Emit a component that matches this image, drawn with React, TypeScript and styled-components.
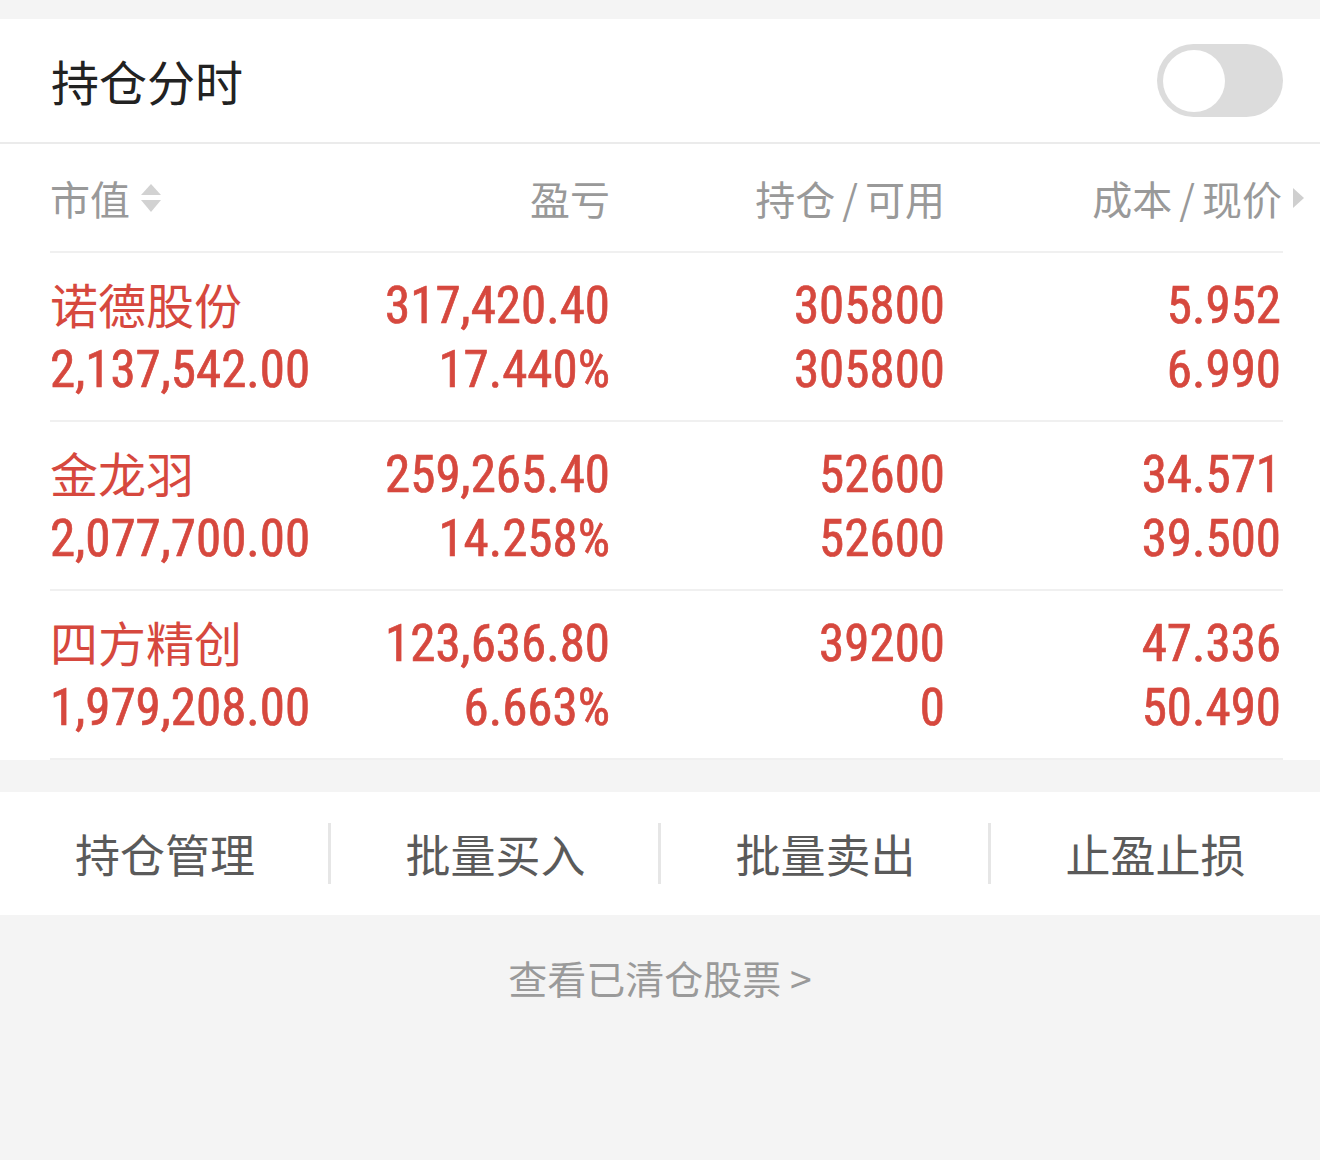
import React from 'react';
import styled, { createGlobalStyle } from 'styled-components';

const GlobalStyle = createGlobalStyle`
  html, body {
    margin: 0;
    padding: 0;
    background: #f4f4f4;
    font-family: 'Noto Sans CJK SC', 'Noto Sans', sans-serif;
  }
`;

const RED = '#d6483e';

// page shell
const Page = styled.div`
  width: 1320px;
  min-height: 1160px;
  padding-top: 19px;
  background: #f4f4f4;
`;

const TopBar = styled.div`
  height: 123px;
  display: flex;
  align-items: center;
  justify-content: space-between;
  padding: 0 37px 0 51px;
  background: #fff;
  border-bottom: 2px solid #ebebeb;
`;

const Title = styled.div`
  font-size: 48px;
  line-height: 1;
  color: #222;
  margin-top: -2px;
`;

const Toggle = styled.div`
  width: 126px;
  height: 73px;
  border-radius: 37px;
  background: #dcdcdc;
  display: flex;
  align-items: center;
  padding-left: 6px;
  box-sizing: border-box;
`;

const Knob = styled.div`
  width: 62px;
  height: 62px;
  border-radius: 50%;
  background: #fff;
`;

// holdings table
const Table = styled.div`
  background: #fff;
  padding: 0 37px 0 50px;
`;

const Grid = styled.div<{ $head?: boolean }>`
  display: grid;
  grid-template-columns: 280px 280px 335px 1fr;
  border-bottom: 2px solid #f0f0f0;
  height: ${(p) => (p.$head ? '109px' : '169px')};
  align-items: ${(p) => (p.$head ? 'center' : 'start')};
  padding-top: ${(p) => (p.$head ? '0' : '21px')};
  box-sizing: border-box;
`;

const HeadCell = styled.div<{ $left?: boolean; $trail?: boolean }>`
  display: flex;
  align-items: center;
  justify-content: ${(p) => (p.$left ? 'flex-start' : 'flex-end')};
  gap: 10px;
  font-size: 40px;
  line-height: 1;
  color: #999;
  margin-top: 0;
  margin-right: ${(p) => (p.$trail ? '-22px' : '0')};
`;

const Slash = styled.span`
  margin: 0 7px;
`;

const Cell = styled.div<{ $left?: boolean; $end?: boolean }>`
  display: flex;
  flex-direction: column;
  align-items: ${(p) => (p.$left ? 'flex-start' : 'flex-end')};
  padding-right: ${(p) => (p.$end ? '2px' : '0')};
  color: ${RED};
`;

const Name = styled.div`
  font-size: 48px;
  line-height: 58px;
  height: 64px;
`;

const Num = styled.div`
  font-family: 'Liberation Sans Narrow', 'Roboto Condensed', Roboto, sans-serif;
  font-size: 51px;
  line-height: 64px;
  height: 64px;
  -webkit-text-stroke: 0.7px ${RED};
`;

// bottom actions
const ActionBar = styled.div`
  margin-top: 32px;
  height: 123px;
  background: #fff;
  display: grid;
  grid-template-columns: repeat(4, 1fr);
  align-items: center;
`;

const Action = styled.div<{ $first?: boolean }>`
  height: 61px;
  display: flex;
  align-items: center;
  justify-content: center;
  font-size: 45px;
  color: #5a5a5a;
  border-left: ${(p) => (p.$first ? 'none' : '3px solid #e6e6e6')};
  margin-left: ${(p) => (p.$first ? '0' : '-2px')};
`;

const Footer = styled.div`
  text-align: center;
  font-size: 39px;
  line-height: 50px;
  color: #9a9a9a;
  margin-top: 37px;
`;

const SortIcon = () => (
  <svg width="22" height="32" viewBox="0 0 22 32">
    <polygon points="11,2 21,13 1,13" fill="#d2d2d2" />
    <polygon points="1,18 21,18 11,30" fill="#d2d2d2" />
  </svg>
);

const Caret = () => (
  <svg width="13" height="22" viewBox="0 0 13 22">
    <polygon points="1,1 12,11 1,21" fill="#cfcfcf" />
  </svg>
);

const rows = [
  { name: '诺德股份', value: '2,137,542.00', pl: '317,420.40', pct: '17.440%', hold: '305800', avail: '305800', cost: '5.952', price: '6.990' },
  { name: '金龙羽', value: '2,077,700.00', pl: '259,265.40', pct: '14.258%', hold: '52600', avail: '52600', cost: '34.571', price: '39.500' },
  { name: '四方精创', value: '1,979,208.00', pl: '123,636.80', pct: '6.663%', hold: '39200', avail: '0', cost: '47.336', price: '50.490' },
];

const actions = ['持仓管理', '批量买入', '批量卖出', '止盈止损'];

export default function App() {
  return (
    <Page>
      <GlobalStyle />
      <TopBar>
        <Title>持仓分时</Title>
        <Toggle>
          <Knob />
        </Toggle>
      </TopBar>

      <Table>
        <Grid $head>
          <HeadCell $left>
            市值
            <SortIcon />
          </HeadCell>
          <HeadCell>盈亏</HeadCell>
          <HeadCell>
            <span>
              持仓<Slash>/</Slash>可用
            </span>
          </HeadCell>
          <HeadCell $trail>
            <span>
              成本<Slash>/</Slash>现价
            </span>
            <Caret />
          </HeadCell>
        </Grid>
        {rows.map((r) => (
          <Grid key={r.name}>
            <Cell $left>
              <Name>{r.name}</Name>
              <Num>{r.value}</Num>
            </Cell>
            <Cell>
              <Num>{r.pl}</Num>
              <Num>{r.pct}</Num>
            </Cell>
            <Cell>
              <Num>{r.hold}</Num>
              <Num>{r.avail}</Num>
            </Cell>
            <Cell $end>
              <Num>{r.cost}</Num>
              <Num>{r.price}</Num>
            </Cell>
          </Grid>
        ))}
      </Table>

      <ActionBar>
        {actions.map((a, i) => (
          <Action key={a} $first={i === 0}>
            {a}
          </Action>
        ))}
      </ActionBar>

      <Footer>查看已清仓股票 &gt;</Footer>
    </Page>
  );
}
